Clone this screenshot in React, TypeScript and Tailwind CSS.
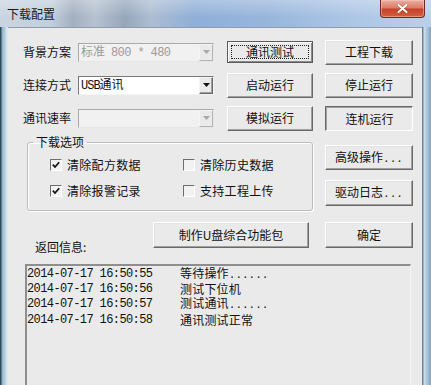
import React from "react";

const CJK = "font-['Noto_Sans_CJK_SC',sans-serif]";
const MONO = "font-['Liberation_Mono',monospace]";

function Raised({ className, children }: { className: string; children?: React.ReactNode }) {
  return (
    <div
      className={`flex items-center justify-center text-[12px] leading-[14px] text-[#111] border border-t-white border-l-white border-r-[#696969] border-b-[#696969] shadow-[inset_-1px_-1px_0_#a0a0a0,inset_1px_1px_0_#e3e3e3] ${className}`}
    >
      <span className="whitespace-nowrap">{children}</span>
    </div>
  );
}

function Arrow({ disabled }: { disabled?: boolean }) {
  return (
    <div
      className={`w-[14px] h-full flex items-center justify-center border border-t-[#f4f4f4] border-l-[#f4f4f4] ${
        disabled ? "border-r-[#b4b4b4] border-b-[#b4b4b4]" : "border-r-[#696969] border-b-[#696969] shadow-[inset_-1px_-1px_0_#a0a0a0]"
      } bg-[#eaeaea]`}
    >
      <svg width="7" height="4" viewBox="0 0 7 4">
        <polygon points="0,0 7,0 3.5,4" fill={disabled ? "#a8a8a8" : "#111"} />
      </svg>
    </div>
  );
}

function Combo({ disabled, children }: { disabled?: boolean; children?: React.ReactNode }) {
  return (
    <div
      className={`flex w-[136px] h-[19px] border ${
        disabled
          ? "border-t-[#a9a9a9] border-l-[#a9a9a9] border-r-[#e6e6e6] border-b-[#e6e6e6] bg-[#f1f1f1]"
          : "border-t-[#7a7a7a] border-l-[#7a7a7a] border-r-[#f4f4f4] border-b-[#f4f4f4] bg-white"
      }`}
    >
      <div className="flex-1 flex items-center pl-[2px] text-[12px] leading-[14px] whitespace-nowrap overflow-hidden">
        <span>{children}</span>
      </div>
      <Arrow disabled={disabled} />
    </div>
  );
}

function Check({ checked, label }: { checked?: boolean; label: string }) {
  return (
    <div className="flex items-center h-[16px]">
      <div className="w-[12px] h-[12px] border border-t-[#6e6e6e] border-l-[#6e6e6e] border-r-white border-b-white bg-[#f2f2f2] flex items-center justify-center">
        {checked && (
          <svg width="8" height="8" viewBox="0 0 8 8">
            <path d="M0.8 3.6 L3 6 L7.2 1.2" stroke="#111" strokeWidth="1.7" fill="none" />
          </svg>
        )}
      </div>
      <span className="ml-[5px] text-[12px] leading-[14px] text-[#111] tracking-[0.3px]">{label}</span>
    </div>
  );
}

const logs: [string, string, boolean][] = [
  ["2014-07-17 16:50:55", "等待操作", true],
  ["2014-07-17 16:50:56", "测试下位机", false],
  ["2014-07-17 16:50:57", "测试通讯", true],
  ["2014-07-17 16:50:58", "通讯测试正常", false],
];

export default function App() {
  return (
    <div className={`w-[431px] h-[385px] overflow-hidden flex flex-col bg-[#a9c3dc] ${CJK}`}>
      {/* Title bar */}
      <div className="h-[27px] flex items-start justify-between bg-[linear-gradient(180deg,rgba(255,255,255,0.28),rgba(255,255,255,0)_65%),linear-gradient(90deg,#c9d5e2_0%,#c1cedc_12%,#a2afbf_17%,#b6c2d0_22%,#96a6bb_29%,#acbdd2_35%,#90afd8_45%,#98b6dc_62%,#acc6e6_82%,#bad0ea_100%)]">
        <div className="h-[27px] flex items-center pl-[7px] text-[12px] leading-[14px] text-[#1a1a1a]">下载配置</div>
        <div className="mr-[6px] w-[45px] h-[18px] rounded-b-[4px] border border-t-0 border-[#6b2a22] bg-[linear-gradient(180deg,#eab0a2_0%,#dc7d69_45%,#c7412b_55%,#d3603f_100%)] flex items-center justify-center shadow-[inset_0_0_0_1px_rgba(255,210,200,0.45)]">
          <svg width="11" height="9" viewBox="0 0 11 9">
            <path d="M1.5 1 L9.5 8 M9.5 1 L1.5 8" stroke="#5a1a12" strokeWidth="3" strokeLinecap="round" opacity="0.35" />
            <path d="M1.5 1 L9.5 8 M9.5 1 L1.5 8" stroke="#ffffff" strokeWidth="2" strokeLinecap="round" />
          </svg>
        </div>
      </div>

      <div className="flex flex-1">
        {/* left frame */}
        <div className="w-[8px] bg-[linear-gradient(90deg,#34485b_0px,#34485b_1px,#8fb2c8_2px,#b4d2e0_5px,#dce8ee_7px,#dce8ee_8px)]" />

        {/* client */}
        <div className="w-[414px] bg-[#eaeaea] border-t border-t-[#8d9cae] flex flex-col text-[#111]">
          {/* top rows */}
          <div className="flex flex-col pt-[12px] gap-[9px]">
            <div className="flex items-center h-[24px] pl-[15px]">
              <div className="w-[55px] text-[12px] leading-[14px]">背景方案</div>
              <Combo disabled>
                <span className="text-[#9a9a9a]">标准</span>
                <span className={`text-[#9a9a9a] ${MONO} tracking-[-0.6px] ml-[6px]`}>800 * 480</span>
              </Combo>
              <div className="ml-[13px] w-[86px] h-[22px] p-[3px] flex border border-[#5a5a5a] shadow-[inset_1px_1px_0_#ffffff,inset_-1px_-1px_0_#8a8a8a]">
                <div className="flex-1 flex items-center justify-center border border-dotted border-[#222] text-[12px] leading-[14px]">
                  通讯测试
                </div>
              </div>
              <Raised className="ml-[12px] w-[88px] h-[25px]">工程下载</Raised>
            </div>

            <div className="flex items-center h-[24px] pl-[15px]">
              <div className="w-[55px] text-[12px] leading-[14px]">连接方式</div>
              <Combo>
                <span className={`${MONO} text-[12px] tracking-[-1px]`}>USB</span>
                <span>通讯</span>
              </Combo>
              <Raised className="ml-[13px] w-[86px] h-[25px]">启动运行</Raised>
              <Raised className="ml-[12px] w-[88px] h-[25px]">停止运行</Raised>
            </div>

            <div className="flex items-center h-[24px] pl-[15px]">
              <div className="w-[55px] text-[12px] leading-[14px]">通讯速率</div>
              <Combo disabled />
              <Raised className="ml-[13px] w-[86px] h-[25px]">模拟运行</Raised>
              <div className="ml-[12px] w-[88px] h-[25px] flex items-center justify-center pt-[1px] pl-[1px] text-[12px] leading-[14px] border border-t-[#696969] border-l-[#696969] border-r-white border-b-white shadow-[inset_1px_1px_0_#a0a0a0]">
                连机运行
              </div>
            </div>
          </div>

          {/* middle section */}
          <div className="flex mt-[5px]">
            <fieldset className="ml-[19px] w-[286px] h-[76px] border border-[#bcbcbc] rounded-[3px] shadow-[inset_1px_1px_0_#ffffff,1px_1px_0_#ffffff]">
              <legend className="ml-[5px] px-[3px] text-[12px] leading-[14px]">下载选项</legend>
              <div className="flex pl-[22px] mt-[8px]">
                <div className="w-[133px]">
                  <Check checked label="清除配方数据" />
                </div>
                <Check label="清除历史数据" />
              </div>
              <div className="flex pl-[22px] mt-[10px]">
                <div className="w-[133px]">
                  <Check checked label="清除报警记录" />
                </div>
                <Check label="支持工程上传" />
              </div>
            </fieldset>
            <div className="ml-[12px] mt-[10px] flex flex-col gap-[10px]">
              <Raised className="w-[88px] h-[25px]">
                高级操作<span className={`${MONO} text-[11px]`}>...</span>
              </Raised>
              <Raised className="w-[88px] h-[26px]">
                驱动日志<span className={`${MONO} text-[11px]`}>...</span>
              </Raised>
            </div>
          </div>

          {/* bottom row */}
          <div className="flex items-start mt-[11px] pl-[27px]">
            <div className="w-[118px] mt-[18px] text-[12px] leading-[14px]">返回信息:</div>
            <Raised className="w-[156px] h-[26px]">制作U盘综合功能包</Raised>
            <Raised className="ml-[16px] w-[88px] h-[26px]">确定</Raised>
          </div>

          {/* list box */}
          <div className="ml-[17px] mt-[10px] w-[386px] h-[130px] border-t-2 border-l-2 border-t-[#8e8e8e] border-l-[#8e8e8e] border-r border-r-[#f4f4f4] bg-[#eaeaea] flex flex-col">
            {logs.map(([d, t, dots]) => (
              <div key={d} className="flex items-center h-[15.3px] whitespace-nowrap">
                <span className={`w-[153px] ${MONO} text-[12px] leading-[14px] tracking-[-0.6px] text-[#111]`}>{d}</span>
                <span className="text-[12px] leading-[14px] tracking-[0.2px] text-[#111]">
                  {t}
                  {dots && <span className={`${MONO} text-[11px] tracking-[0px]`}>......</span>}
                </span>
              </div>
            ))}
          </div>
        </div>

        {/* right frame */}
        <div className="w-[9px] bg-[linear-gradient(90deg,#6f8294_0px,#6f8294_1px,#cfe0ec_2px,#a9c7df_5px,#86a3bf_9px)]" />
      </div>
    </div>
  );
}
